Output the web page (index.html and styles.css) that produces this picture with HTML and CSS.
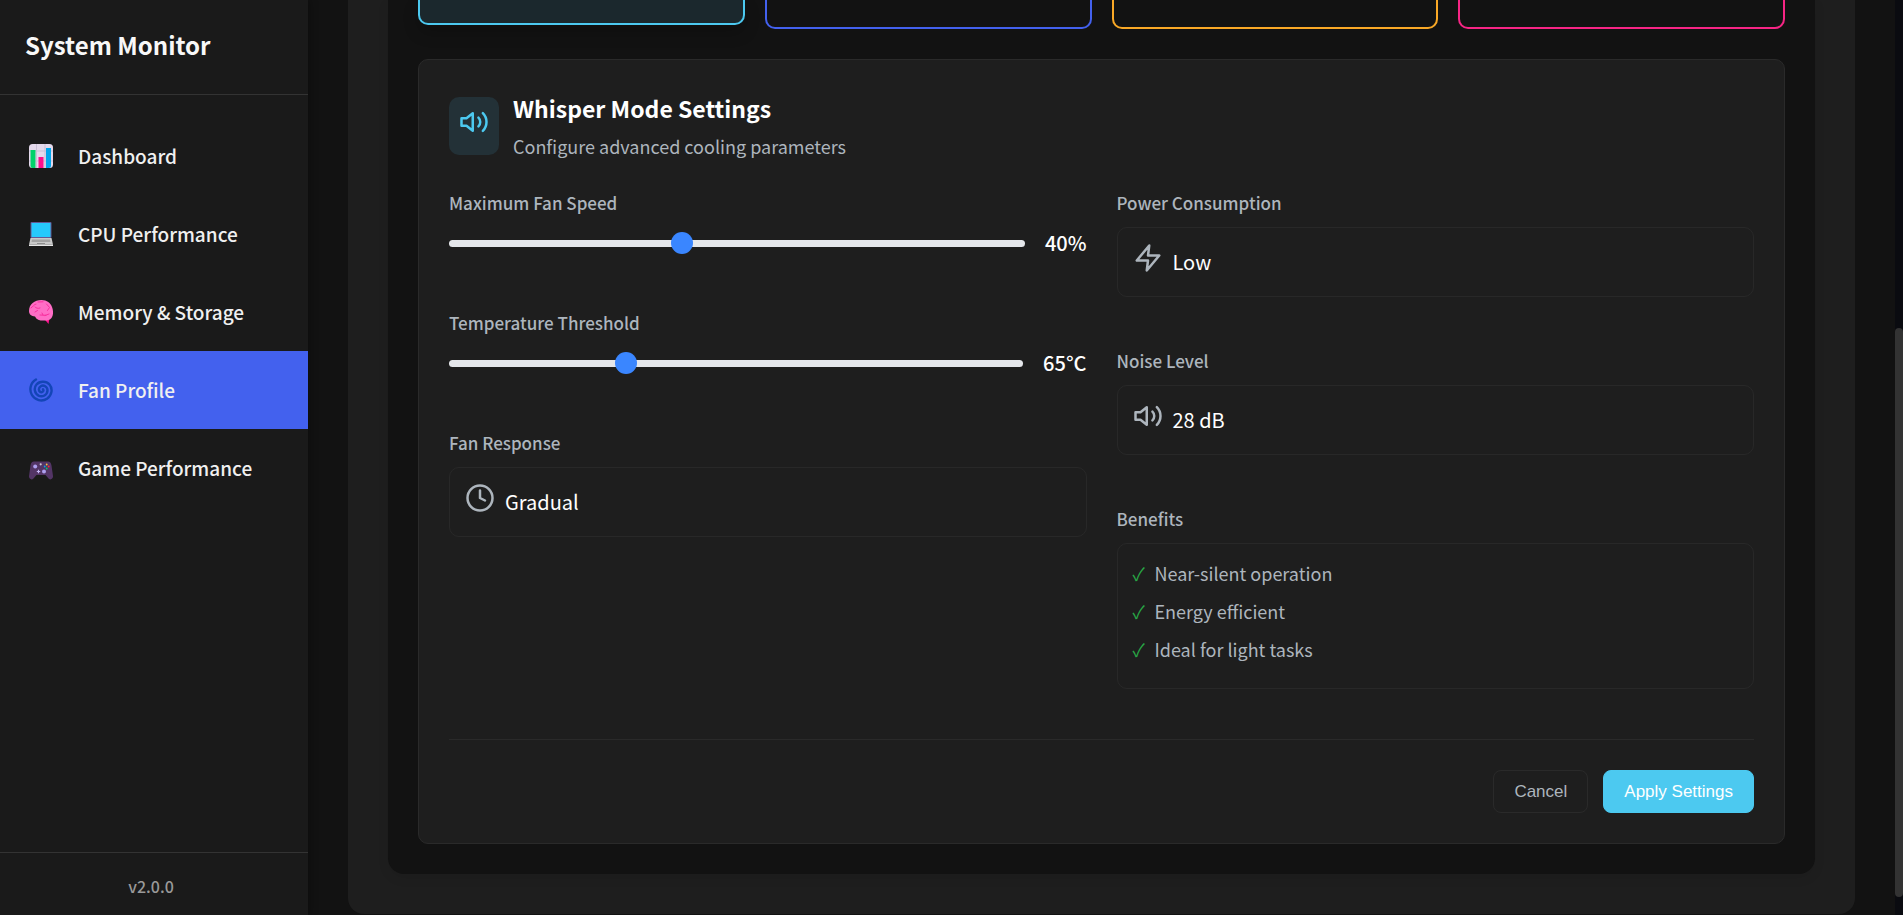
FILE: index.html
```html
<!DOCTYPE html>
<html lang="en">
<head>
<meta charset="utf-8">
<title>System Monitor</title>
<link rel="stylesheet" href="styles.css">
</head>
<body>
<div class="app">
  <aside class="sidebar">
    <header class="sidebar-header"><h1 class="sidebar-title">System Monitor</h1></header>
    <nav class="nav">
      <a class="nav-item" href="#dashboard">
        <svg class="nav-icon" viewBox="0 0 24 24" aria-hidden="true">
          <rect width="24" height="24" rx="3.500" fill="#e4d9ec"/>
          <path d="M7.500 0v24M16 0v24M0 7h24M0 17h24" stroke="#c9bfd6" stroke-width="1"/>
          <path d="M1.500 6h5v18H3.500a2 2 0 0 1-2-2z" fill="#00d26a"/>
          <path d="M9.500 13h5v11h-5z" fill="#fc0f8c"/>
          <path d="M17 4h5v18a2 2 0 0 1-2 2h-3z" fill="#00a6ed"/>
        </svg>
        <span>Dashboard</span>
      </a>
      <a class="nav-item" href="#cpu">
        <svg class="nav-icon" viewBox="0 0 24 24" aria-hidden="true">
          <rect x="1.500" y="0" width="21" height="16" rx="1" fill="#635994"/>
          <rect x="2.500" y="1" width="19" height="14" fill="#26c9fc"/>
          <path d="M1.500 16h21l1.500 6.500H0z" fill="#c9c9c9"/>
          <path d="M3 17.500h18l.5 2.500h-19z" fill="#a2a2a2"/>
          <path d="M8 21h8v1.500H8z" fill="#8d8d8d"/>
          <path d="M0 22.500h24V24H0z" fill="#e6e6e6"/>
        </svg>
        <span>CPU Performance</span>
      </a>
      <a class="nav-item" href="#memory">
        <svg class="nav-icon" viewBox="0 0 24 24" aria-hidden="true">
          <path d="M14.500 18l5 6 1-6z" fill="#fc0f8c"/>
          <path d="M12.500 0C18 0 21.500 3 23 7c1.500 4 1.500 8-.5 11-1.500 2-4 2.500-6.500 2.500-4 .5-8.500-.5-10-4C2.500 16 0 14.500 0 11 0 4 5.500 0 12.500 0z" fill="#ff6dc6"/>
          <path d="M2 8c2-1 3-4 5-4M9 2l5-.2M17.500 4l3 3.500-2 3M6 12l2.500-1.500M11 8c-2 1-4 0-5-1M11 15l6 .3M20 14l-4 1.500M13 13l1 2" fill="none" stroke="#f92f9f" stroke-width="1" stroke-linecap="round"/>
        </svg>
        <span>Memory &amp; Storage</span>
      </a>
      <a class="nav-item nav-item-active" href="#fan" aria-current="page">
        <svg class="nav-icon" viewBox="0 0 24 24" aria-hidden="true">
          <path d="M7 1.500C1 5 .2 12 2.800 16.800C6 22.500 13 24 18 20.800C23 17.500 24 10.500 20.500 6.500C17 2.500 10.500 3 7.500 6.500C4.500 10 5.500 15.500 9.500 17.600C13.500 19.500 18.500 17 18.500 12.300C18.500 8.500 14.500 6.500 11.800 8.200C9 10 9.500 13.800 12.200 14.200C14 14.300 15 12.500 14 11.200" fill="none" stroke="#1345b7" stroke-width="2.400" stroke-linecap="round"/>
        </svg>
        <span>Fan Profile</span>
      </a>
      <a class="nav-item" href="#game">
        <svg class="nav-icon" viewBox="0 0 24 24" aria-hidden="true">
          <path d="M5 5.500h14c2 0 3 1.500 3.500 4L24 20c.3 3-2.500 4.500-4.500 2.500L16.500 19h-9l-3 3.500C2.500 24.500-.3 23 0 20L1.500 9.500C2 7 3 5.500 5 5.500z" fill="#533566"/>
          <circle cx="6.200" cy="10.500" r="2" fill="#aea0f0"/>
          <circle cx="15" cy="15.500" r="2" fill="#aea0f0"/>
          <path d="M9.500 13.800v3.400M7.800 15.500h3.400" stroke="#c4b5f5" stroke-width="1.200"/>
          <circle cx="11.700" cy="8.300" r="1.100" fill="#cdc4d6"/>
          <circle cx="17.700" cy="8.500" r=".9" fill="#f9c23c"/>
          <circle cx="15.700" cy="10.500" r=".9" fill="#00a6ed"/>
          <circle cx="19.700" cy="10.500" r=".9" fill="#f8312f"/>
          <circle cx="17.700" cy="12.500" r=".9" fill="#00d26a"/>
        </svg>
        <span>Game Performance</span>
      </a>
    </nav>
    <footer class="sidebar-footer">v2.0.0</footer>
  </aside>

  <main class="main">
    <div class="panel">
      <div class="content">
        <div class="profiles">
          <div class="profile profile-whisper"></div>
          <div class="profile profile-balanced"></div>
          <div class="profile profile-performance"></div>
          <div class="profile profile-turbo"></div>
        </div>

        <section class="settings">
          <header class="settings-header">
            <div class="settings-icon">
              <svg class="icon" viewBox="0 0 24 24" aria-hidden="true"><path d="M11 5 6 9H2v6h4l5 4zM19.070 4.930a10 10 0 0 1 0 14.140M15.540 8.460a5 5 0 0 1 0 7.070"/></svg>
            </div>
            <div>
              <h2 class="settings-title">Whisper Mode Settings</h2>
              <p class="settings-subtitle">Configure advanced cooling parameters</p>
            </div>
          </header>

          <div class="settings-grid">
            <div class="column">
              <div class="group">
                <label class="label" for="speed">Maximum Fan Speed</label>
                <div class="slider-row">
                  <input class="slider" id="speed" type="range" min="0" max="100" value="40">
                  <output class="slider-value" for="speed">40%</output>
                </div>
              </div>
              <div class="group">
                <label class="label" for="temp">Temperature Threshold</label>
                <div class="slider-row">
                  <input class="slider" id="temp" type="range" min="50" max="100" value="65">
                  <output class="slider-value" for="temp">65°C</output>
                </div>
              </div>
              <div class="group">
                <div class="label">Fan Response</div>
                <div class="box value-box">
                  <svg class="icon" viewBox="0 0 24 24" aria-hidden="true"><circle cx="12" cy="12" r="10"/><path d="M12 6v6l4 2"/></svg>
                  <span>Gradual</span>
                </div>
              </div>
            </div>
            <div class="column">
              <div class="group">
                <div class="label">Power Consumption</div>
                <div class="box value-box">
                  <svg class="icon" viewBox="0 0 24 24" aria-hidden="true"><path d="M13 2 3 14h9l-1 8 10-12h-9z"/></svg>
                  <span>Low</span>
                </div>
              </div>
              <div class="group">
                <div class="label">Noise Level</div>
                <div class="box value-box">
                  <svg class="icon" viewBox="0 0 24 24" aria-hidden="true"><path d="M11 5 6 9H2v6h4l5 4zM19.070 4.930a10 10 0 0 1 0 14.140M15.540 8.460a5 5 0 0 1 0 7.070"/></svg>
                  <span>28 dB</span>
                </div>
              </div>
              <div class="group">
                <div class="label">Benefits</div>
                <ul class="box benefits">
                  <li class="benefit"><span class="check">✓</span>Near-silent operation</li>
                  <li class="benefit"><span class="check">✓</span>Energy efficient</li>
                  <li class="benefit"><span class="check">✓</span>Ideal for light tasks</li>
                </ul>
              </div>
            </div>
          </div>

          <footer class="actions">
            <button class="button" type="button">Cancel</button>
            <button class="button button-primary" type="button">Apply Settings</button>
          </footer>
        </section>
      </div>
    </div>
  </main>
  <div class="scrollbar"><div class="scrollbar-thumb"></div></div>
</div>
</body>
</html>
```
FILE: styles.css
```css
* { box-sizing: border-box; margin: 0; padding: 0; }

body {
  background: #121212;
  color: #fff;
  font-family: "Noto Sans CJK JP", "Noto Sans", sans-serif;
  font-size: 18px;
  line-height: 28px;
}

.app { display: flex; height: 100vh; overflow: hidden; }

/* Sidebar */
.sidebar {
  display: flex;
  flex-direction: column;
  flex: 0 0 308px;
  background: #1a1a1a;
  box-shadow: 2px 0 8px rgba(0, 0, 0, 0.3);
}
.sidebar-header { padding: 26px 25px 30px; border-bottom: 1px solid #333; }
.sidebar-title { font-size: 24px; line-height: 38px; font-weight: 700; color: #f8f8f8; }
.nav { flex: 1; padding-top: 22px; }
.nav-item {
  display: flex;
  align-items: center;
  gap: 25px;
  height: 78px;
  padding: 0 29px;
  color: #f0f0f0;
  font-size: 19px;
  font-weight: 500;
  text-decoration: none;
}
.nav-item-active { background: #4361ee; }
.nav-icon { width: 24px; height: 24px; }
.sidebar-footer {
  padding: 19px 26px 15px 20px;
  border-top: 1px solid #333;
  color: #999;
  font-size: 16px;
  font-weight: 500;
  text-align: center;
}

/* Main area */
.main { flex: 1; min-width: 0; padding: 0 40px; }
.panel {
  padding: 0 40px 40px;
  background: #1e1e1e;
  border-radius: 0 0 16px 16px;
}
.content {
  padding: 0 30px 30px;
  background: #121212;
  border-radius: 0 0 16px 16px;
  box-shadow: 0 4px 12px rgba(0, 0, 0, 0.08);
}

.profiles {
  display: grid;
  grid-template-columns: repeat(4, 1fr);
  gap: 20px;
  margin-bottom: 30px;
}
.profile {
  height: 29px;
  border: 2px solid;
  border-top: 0;
  border-radius: 0 0 10px 10px;
}
.profile-whisper {
  height: 25px;
  border-color: #4cc9f0;
  background: #1b282d;
  box-shadow: 0 8px 16px rgba(0, 0, 0, 0.2);
}
.profile-balanced { border-color: #4361ee; }
.profile-performance { border-color: #f9a826; }
.profile-turbo { border-color: #f72585; }

/* Settings */
.settings {
  padding: 30px;
  background: #1e1e1e;
  border: 1px solid #2a2a2a;
  border-radius: 10px;
}
.settings-header { display: flex; align-items: center; gap: 14px; margin-bottom: 28px; }
.settings-icon {
  padding: 10px 10px 18px;
  border-radius: 10px;
  background: #233137;
  color: #4cc9f0;
}
.settings-title { margin-bottom: 5px; font-size: 23px; line-height: 36px; font-weight: 700; }
.settings-subtitle { line-height: 30px; color: #adb5bd; }

.icon {
  display: block;
  width: 30px;
  height: 30px;
  fill: none;
  stroke: currentColor;
  stroke-width: 2;
  stroke-linecap: round;
  stroke-linejoin: round;
}

.settings-grid { display: grid; grid-template-columns: 1fr 1fr; gap: 30px; }
.column { display: flex; flex-direction: column; gap: 50px; }
.label { display: block; margin-bottom: 10px; color: #adb5bd; font-size: 17px; font-weight: 500; }

.slider-row { display: flex; align-items: center; gap: 20px; }
.slider {
  flex: 1;
  min-width: 0;
  height: 7px;
  border-radius: 4px;
  background: #e5e7eb;
  appearance: none;
}
.slider::-webkit-slider-thumb {
  width: 22px;
  height: 22px;
  border-radius: 50%;
  background: #3a86ff;
  appearance: none;
}
.slider-value { font-size: 20px; line-height: 32px; font-weight: 500; }

.box { border: 1px solid #282828; border-radius: 10px; padding: 15px; }
.value-box { display: flex; gap: 10px; font-size: 20px; line-height: 38px; }
.value-box .icon { color: #adb5bd; }

.benefits { list-style: none; color: #adb5bd; }
.benefit { display: flex; gap: 8px; margin-bottom: 10px; }
.check { width: 14px; color: #28a745; }

.actions {
  display: flex;
  justify-content: flex-end;
  gap: 15px;
  margin-top: 50px;
  padding-top: 30px;
  border-top: 1px solid #2a2a2a;
}
.button {
  padding: 10px 20px;
  border: 1px solid #2a2a2a;
  border-radius: 8px;
  background: transparent;
  color: #adb5bd;
  font: 17px/21px "Liberation Sans", Arial, sans-serif;
}
.button-primary { border-color: #4cc9f0; background: #4cc9f0; color: #fff; }

/* Scrollbar */
.scrollbar { flex: 0 0 8px; display: flex; flex-direction: column; background: #0a0b10; padding: 328px 0 18px; }
.scrollbar-thumb { flex: 1; border-radius: 4px; background: #333; }
```
